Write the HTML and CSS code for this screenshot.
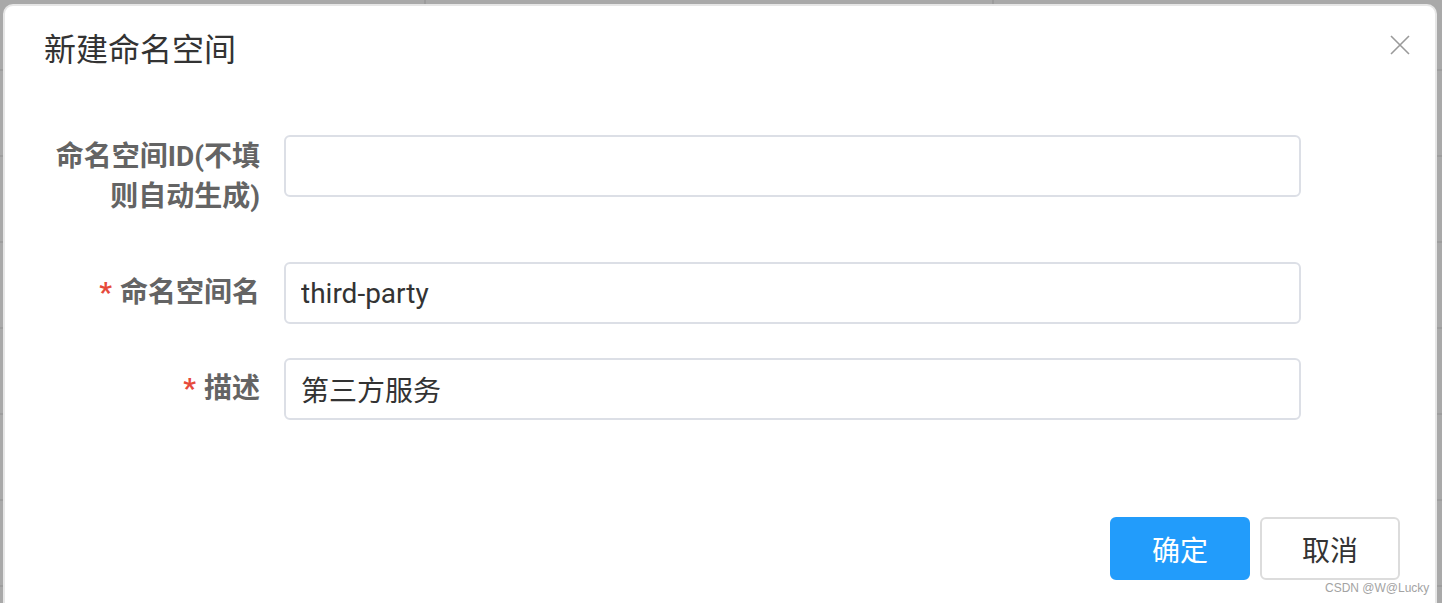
FILE: index.html
```html
<!DOCTYPE html>
<html lang="zh-CN">
<head>
<meta charset="utf-8">
<title>新建命名空间</title>
<link rel="stylesheet" href="styles.css">
</head>
<body>
<div class="dialog">
  <div class="dialog-header">
    <span class="dialog-title">新建命名空间</span>
    <button class="dialog-close" type="button" aria-label="关闭">
      <svg width="20" height="20" viewBox="0 0 20 20"><path d="M1 1L19 19M19 1L1 19" stroke="#9a9a9a" stroke-width="1.6" fill="none"/></svg>
    </button>
  </div>
  <form class="form">
    <div class="form-item form-item--tall">
      <label class="form-label form-label--tall">命名空间ID(不填<br>则自动生成)</label>
      <div class="form-control"><input class="input" type="text"></div>
    </div>
    <div class="form-item">
      <label class="form-label"><span class="required">*</span>命名空间名</label>
      <div class="form-control"><input class="input" type="text" value="third-party"></div>
    </div>
    <div class="form-item">
      <label class="form-label"><span class="required">*</span>描述</label>
      <div class="form-control"><input class="input" type="text" value="第三方服务"></div>
    </div>
  </form>
  <div class="dialog-footer">
    <button class="btn btn--primary" type="button">确定</button>
    <button class="btn" type="button">取消</button>
  </div>
  <span class="watermark">CSDN @W@Lucky</span>
</div>
</body>
</html>
```

FILE: styles.css
```css
html, body {
  margin: 0;
  padding: 0;
  height: 100%;
  overflow: hidden;
}

body {
  background-color: #a9a9a9;
  background-image:
    linear-gradient(to right, transparent 424px, #9c9c9c 424px, #9c9c9c 426px, transparent 426px),
    linear-gradient(to right, transparent 992px, #9c9c9c 992px, #9c9c9c 994px, transparent 994px),
    repeating-linear-gradient(to bottom, transparent 0, transparent 69px, #9d9d9d 69px, #9d9d9d 71px, transparent 71px, transparent 86px);
  font-family: Roboto, "Noto Sans CJK SC", sans-serif;
}

.dialog {
  position: relative;
  box-sizing: border-box;
  margin: 4px 5px 0 3px;
  height: 620px;
  background: #fff;
  border: 2px solid #e6e6e6;
  border-radius: 10px;
  overflow: hidden;
}

.dialog-header {
  padding: 19px 0 0 39px;
}

.dialog-title {
  display: block;
  font-family: "Noto Sans CJK SC", sans-serif;
  font-size: 32px;
  line-height: 44px;
  color: #333;
}

.dialog-close {
  position: absolute;
  top: 29px;
  right: 25px;
  width: 20px;
  height: 20px;
  padding: 0;
  border: 0;
  background: transparent;
  cursor: pointer;
}

.dialog-close svg {
  display: block;
}

.form {
  padding: 66px 134px 0 0;
}

.form-item {
  display: flex;
  align-items: flex-start;
  gap: 24px;
  margin-bottom: 34px;
}

.form-item--tall {
  margin-bottom: 45px;
}

.form-item:last-child {
  margin-bottom: 0;
}

.form-label {
  flex: 0 0 255px;
  text-align: right;
  font-family: Roboto, "Noto Sans CJK SC", sans-serif;
  font-weight: 700;
  font-size: 28px;
  line-height: 62px;
  color: #646464;
}

.form-label--tall {
  line-height: 40px;
  padding-top: 2px;
}

.required {
  color: #e64a3b;
  margin-right: 8px;
  font-weight: 700;
}

.form-control {
  flex: 1;
}

.input {
  display: block;
  box-sizing: border-box;
  width: 100%;
  height: 62px;
  padding: 0 15px;
  border: 2px solid #dcdfe6;
  border-radius: 6px;
  background: #fff;
  font-family: Roboto, "Noto Sans CJK SC", sans-serif;
  font-size: 28px;
  color: #333;
  outline: none;
}

.dialog-footer {
  display: flex;
  justify-content: flex-end;
  gap: 10px;
  margin-top: 97px;
  padding-right: 35px;
}

.btn {
  box-sizing: border-box;
  width: 140px;
  height: 63px;
  border: 2px solid #dcdcdc;
  border-radius: 6px;
  background: #fff;
  color: #333;
  font-family: "Noto Sans CJK SC", sans-serif;
  font-size: 28px;
  line-height: 1;
  padding: 0;
  cursor: pointer;
}

.btn--primary {
  background: #229cfb;
  border-color: #229cfb;
  color: #fff;
}

.watermark {
  position: absolute;
  left: 1320px;
  top: 574px;
  white-space: nowrap;
  font-family: "Liberation Sans", Arial, sans-serif;
  font-size: 12px;
  line-height: 16px;
  color: #a3a3a3;
}
```
